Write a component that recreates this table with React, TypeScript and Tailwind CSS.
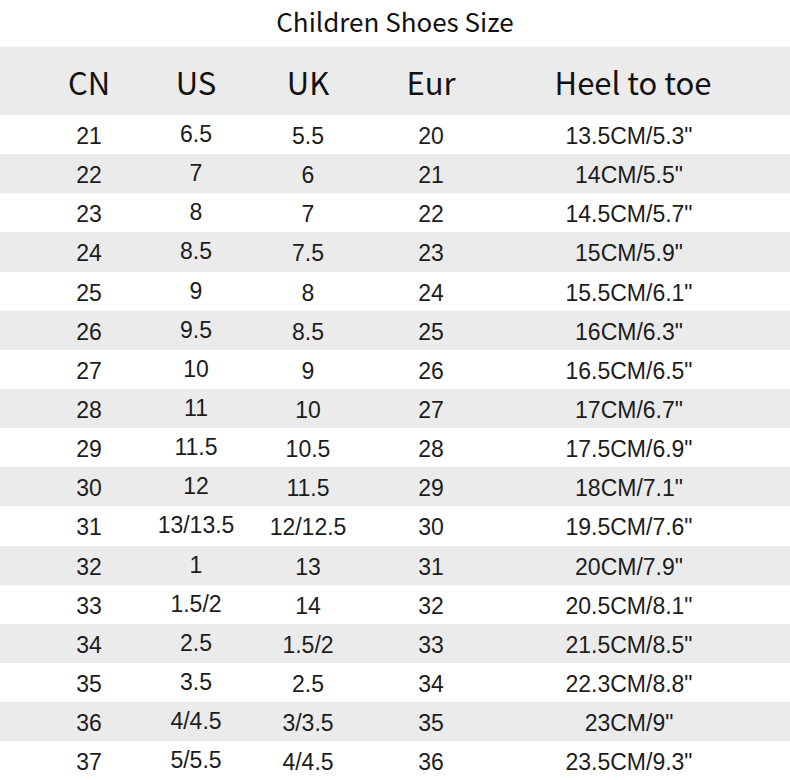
const columns = ['CN', 'US', 'UK', 'Eur', 'Heel to toe']

const rows: string[][] = [
  ['21', '6.5', '5.5', '20', '13.5CM/5.3"'],
  ['22', '7', '6', '21', '14CM/5.5"'],
  ['23', '8', '7', '22', '14.5CM/5.7"'],
  ['24', '8.5', '7.5', '23', '15CM/5.9"'],
  ['25', '9', '8', '24', '15.5CM/6.1"'],
  ['26', '9.5', '8.5', '25', '16CM/6.3"'],
  ['27', '10', '9', '26', '16.5CM/6.5"'],
  ['28', '11', '10', '27', '17CM/6.7"'],
  ['29', '11.5', '10.5', '28', '17.5CM/6.9"'],
  ['30', '12', '11.5', '29', '18CM/7.1"'],
  ['31', '13/13.5', '12/12.5', '30', '19.5CM/7.6"'],
  ['32', '1', '13', '31', '20CM/7.9"'],
  ['33', '1.5/2', '14', '32', '20.5CM/8.1"'],
  ['34', '2.5', '1.5/2', '33', '21.5CM/8.5"'],
  ['35', '3.5', '2.5', '34', '22.3CM/8.8"'],
  ['36', '4/4.5', '3/3.5', '35', '23CM/9"'],
  ['37', '5/5.5', '4/4.5', '36', '23.5CM/9.3"'],
]

// column widths picked so each column's centre lines up with the chart
const grid = 'grid grid-cols-[106px_108px_116px_130px_274px] pl-[36px]'

export default function App() {
  return (
    <div className="w-[790px] h-[780px] overflow-hidden bg-white text-[#1c1c1c]">
      <h1 className="h-[47px] flex items-center justify-center pb-[6px] font-['Noto_Sans_CJK_SC','Noto_Sans',sans-serif] text-[26px] text-[#111]">
        Children Shoes Size
      </h1>

      {/* Header */}
      <div className={`${grid} h-[68px] items-center bg-[#ebebeb] font-['Noto_Sans_CJK_SC','Noto_Sans',sans-serif] text-[31px] leading-none text-[#111]`}>
        {columns.map((c) => (
          <div key={c} className="text-center">{c}</div>
        ))}
      </div>

      {/* Rows */}
      {rows.map((row, i) => (
        <div
          key={row[0]}
          className={`${grid} h-[39.15px] items-center pt-[4px] font-['Liberation_Sans',Arial,sans-serif] text-[23px] leading-none ${
            i % 2 === 1 ? 'bg-[#ebebeb]' : 'bg-white'
          }`}
        >
          {row.map((cell, j) => (
            <div
              key={j}
              className={`text-center ${j === 1 ? '-translate-y-[2px]' : ''} ${j === 4 ? '-translate-x-[4px]' : ''}`}
            >
              {cell}
            </div>
          ))}
        </div>
      ))}
    </div>
  )
}
